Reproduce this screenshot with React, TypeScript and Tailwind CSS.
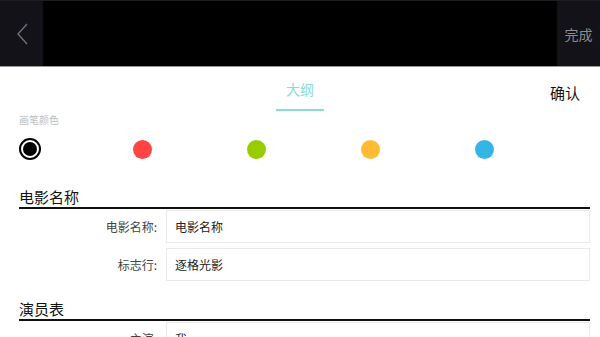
import React from "react";

const font = { fontFamily: '"Noto Sans CJK SC", "Noto Sans", sans-serif' };

function Row({ label, value }: { label: string; value: string }) {
  return (
    <div className="flex items-center h-[33px]">
      <div className="w-[147px] pr-[9px] text-right text-[12px] text-[#444]">{label}</div>
      <div className="flex-1 h-full border border-[#e9e9e9] bg-white flex items-center pl-[8px] text-[12px] text-[#222]">
        {value}
      </div>
    </div>
  );
}

function Heading({ text }: { text: string }) {
  return (
    <div className="border-b-2 border-[#111]">
      <div className="text-[15px] leading-[20px] text-[#111]">{text}</div>
    </div>
  );
}

export default function App() {
  return (
    <div className="w-[600px] h-[337px] overflow-hidden bg-white" style={font}>
      <div className="h-[67px] bg-black border-t border-[#1c1c22] border-b border-b-[#9a9a9a] flex justify-between">
        <div className="w-[43px] h-full bg-[#121218] flex items-center justify-center">
          <svg width="14" height="24" viewBox="0 0 14 24">
            <path d="M12 2 L3 12 L12 22" fill="none" stroke="#707078" strokeWidth="1.4" />
          </svg>
        </div>
        <div className="w-[43px] h-full bg-[#121218] flex items-center justify-center pt-[2px]">
          <span className="text-[14px] text-[#8c8c90]">完成</span>
        </div>
      </div>
      <div className="h-[45px] flex justify-center relative">
        <div className="w-[48px] h-full flex flex-col items-center justify-end">
          <div className="flex-1 flex items-center text-[14px] text-[#8adcd3] pt-[2px]">大纲</div>
          <div className="w-full h-[2px] bg-[#8adcd3] mb-[1px]" />
        </div>
        <div className="absolute right-[20px] top-[15px] text-[15px] text-[#111]">确认</div>
      </div>
      <div className="pl-[19px] mt-[1px] text-[10px] leading-[14px] text-[#bdbdbd]">画笔颜色</div>
      <div className="flex items-center pl-[19px] mt-[11px] h-[22px]">
        <div className="w-[22px] h-[22px] rounded-full border-2 border-black flex items-center justify-center">
          <div className="w-[14px] h-[14px] rounded-full bg-black" />
        </div>
        <div className="ml-[44px] w-[114px] flex justify-center">
          <div className="w-[19px] h-[19px] rounded-full bg-[#ff4444]" />
        </div>
        <div className="w-[114px] flex justify-center">
          <div className="w-[19px] h-[19px] rounded-full bg-[#99cc00]" />
        </div>
        <div className="w-[114px] flex justify-center">
          <div className="w-[19px] h-[19px] rounded-full bg-[#ffbb33]" />
        </div>
        <div className="w-[114px] flex justify-center">
          <div className="w-[19px] h-[19px] rounded-full bg-[#33b5e5]" />
        </div>
      </div>
      <div className="pl-[19px] pr-[10px] mt-[27px]">
        <Heading text="电影名称" />
        <div className="flex flex-col gap-[5px] mt-[1px]">
          <Row label="电影名称:" value="电影名称" />
          <Row label="标志行:" value="逐格光影" />
        </div>
        <div className="mt-[18px]">
          <Heading text="演员表" />
        </div>
        <div className="flex flex-col gap-[5px] mt-[1px]">
          <Row label="主演:" value="我" />
        </div>
      </div>
    </div>
  );
}
